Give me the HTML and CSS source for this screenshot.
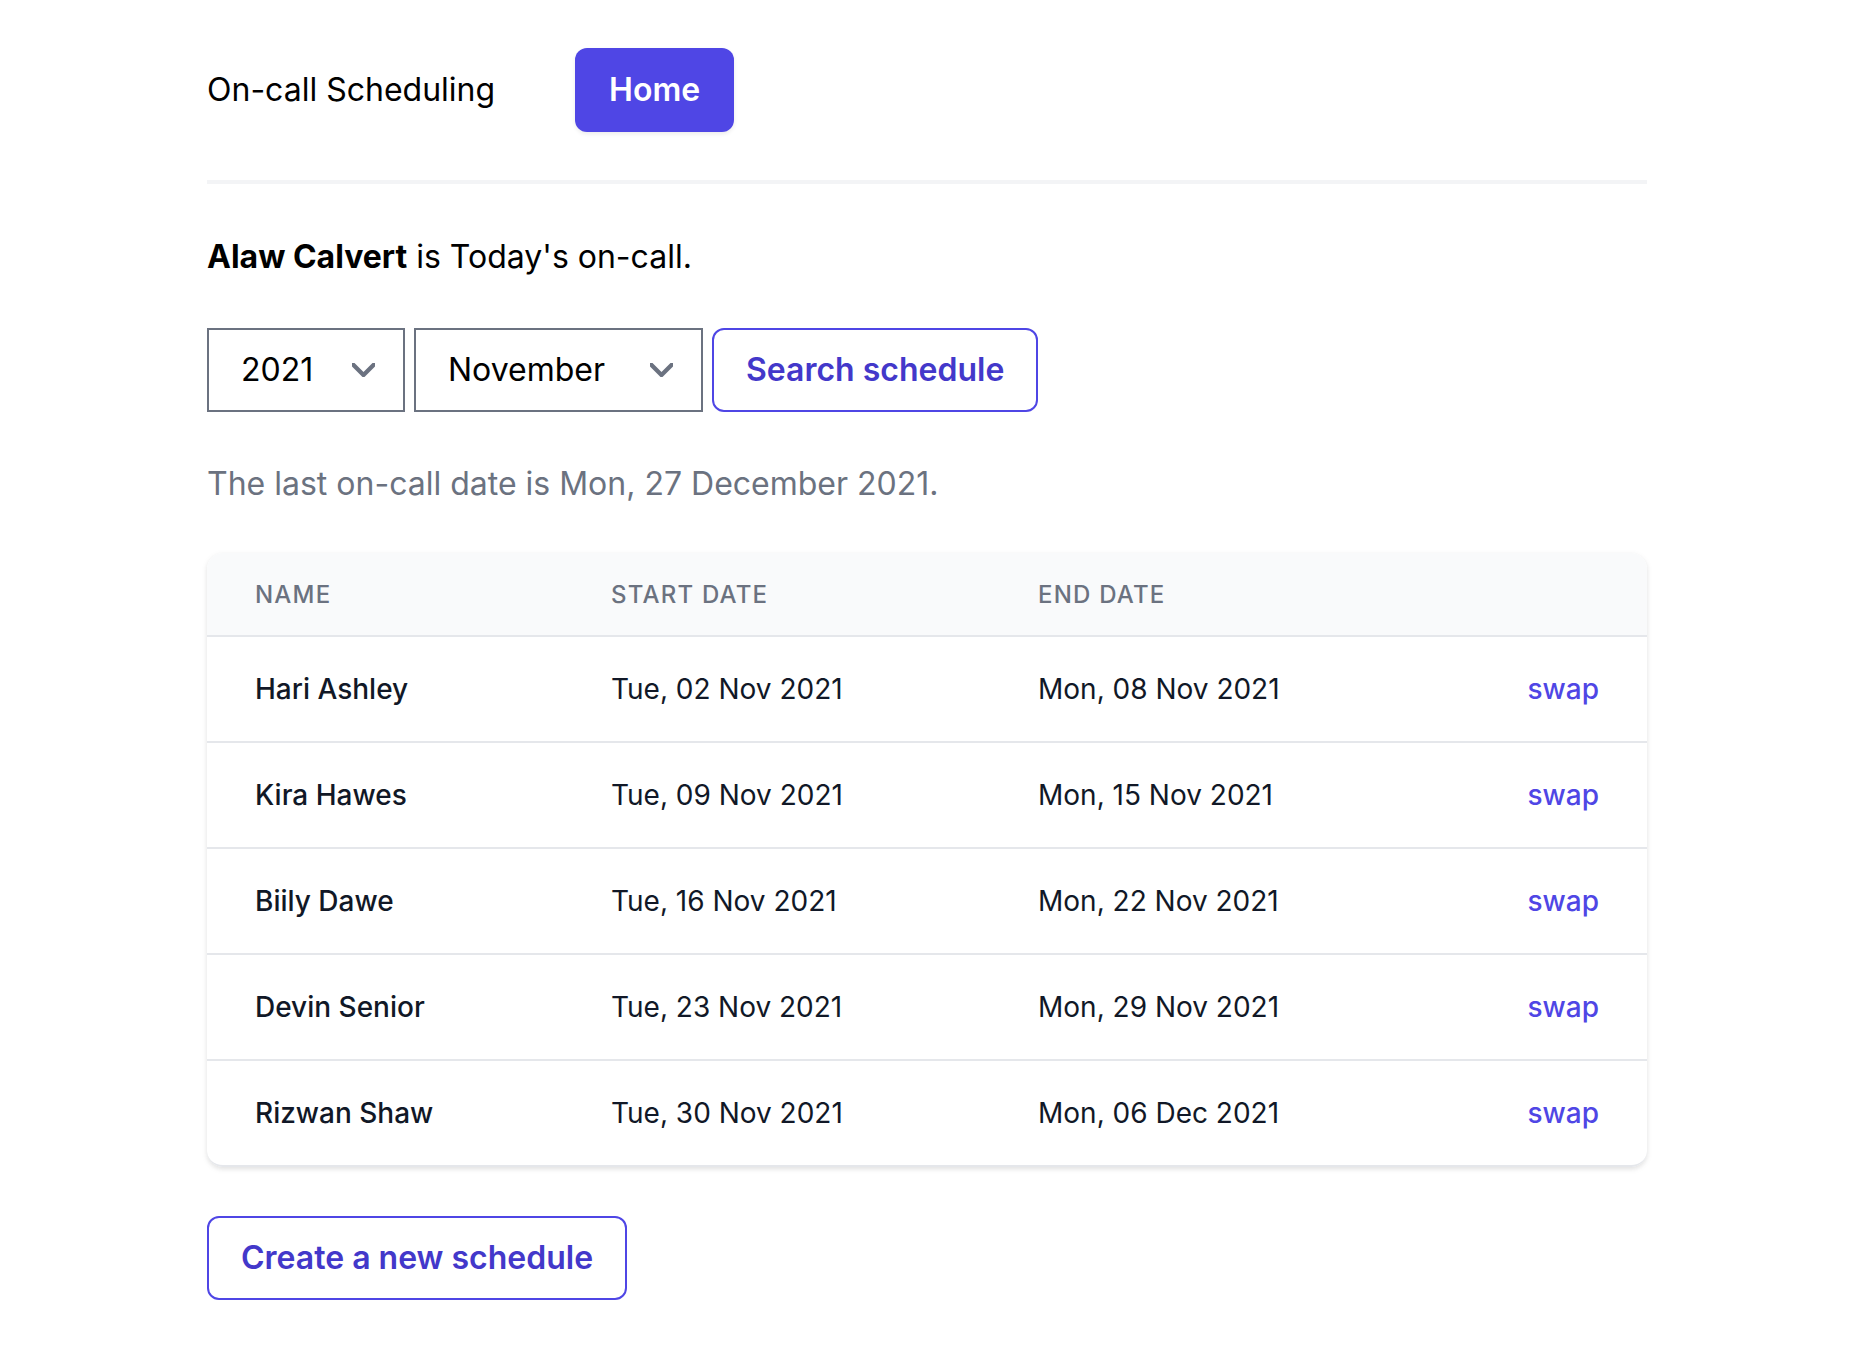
FILE: index.html
```html
<!DOCTYPE html>
<html lang="en">
<head>
<meta charset="utf-8">
<title>On-call Scheduling</title>
<link rel="stylesheet" href="styles.css">
</head>
<body>
<div class="container">
  <nav class="nav">
    <span class="brand">On-call Scheduling</span>
    <a class="btn-primary" href="#">Home</a>
  </nav>

  <main class="main">
    <p class="today"><strong>Alaw Calvert</strong> is Today's on-call.</p>

    <form class="search-row">
      <div class="select-wrap select-year">
        <select class="select">
          <option>2021</option>
        </select>
        <svg class="chevron" viewBox="6 8 8 4.5" width="23" height="14" fill="none" aria-hidden="true"><path d="M6 8l4 4 4-4" stroke="#6b7280" stroke-width="1.5" stroke-linecap="round" stroke-linejoin="round"/></svg>
      </div>
      <div class="select-wrap select-month">
        <select class="select">
          <option>November</option>
        </select>
        <svg class="chevron" viewBox="6 8 8 4.5" width="23" height="14" fill="none" aria-hidden="true"><path d="M6 8l4 4 4-4" stroke="#6b7280" stroke-width="1.5" stroke-linecap="round" stroke-linejoin="round"/></svg>
      </div>
      <button type="button" class="btn-outline">Search schedule</button>
    </form>

    <p class="last-date">The last on-call date is Mon, 27 December 2021.</p>

    <div class="table-card">
      <table class="table">
        <colgroup>
          <col class="col-name">
          <col class="col-start">
          <col class="col-end">
          <col class="col-action">
        </colgroup>
        <thead>
          <tr>
            <th>Name</th>
            <th>Start date</th>
            <th>End date</th>
            <th></th>
          </tr>
        </thead>
        <tbody>
          <tr>
            <td class="name">Hari Ashley</td>
            <td>Tue, 02 Nov 2021</td>
            <td>Mon, 08 Nov 2021</td>
            <td class="action"><a href="#">swap</a></td>
          </tr>
          <tr>
            <td class="name">Kira Hawes</td>
            <td>Tue, 09 Nov 2021</td>
            <td>Mon, 15 Nov 2021</td>
            <td class="action"><a href="#">swap</a></td>
          </tr>
          <tr>
            <td class="name">Biily Dawe</td>
            <td>Tue, 16 Nov 2021</td>
            <td>Mon, 22 Nov 2021</td>
            <td class="action"><a href="#">swap</a></td>
          </tr>
          <tr>
            <td class="name">Devin Senior</td>
            <td>Tue, 23 Nov 2021</td>
            <td>Mon, 29 Nov 2021</td>
            <td class="action"><a href="#">swap</a></td>
          </tr>
          <tr>
            <td class="name">Rizwan Shaw</td>
            <td>Tue, 30 Nov 2021</td>
            <td>Mon, 06 Dec 2021</td>
            <td class="action"><a href="#">swap</a></td>
          </tr>
        </tbody>
      </table>
    </div>

    <a class="btn-outline btn-create" href="#">Create a new schedule</a>
  </main>
</div>
</body>
</html>
```

FILE: styles.css
```css
* {
  box-sizing: border-box;
}

html, body {
  margin: 0;
  padding: 0;
  background: #ffffff;
}

body {
  font-family: Inter, "Noto Sans", "Liberation Sans", sans-serif;
  font-size: 32px;
  line-height: 48px;
  color: #000000;
}

.container {
  max-width: 1440px;
  margin: 0 auto;
}

.nav {
  display: flex;
  align-items: center;
  gap: 80px;
  padding: 48px 0 48px;
  border-bottom: 4px solid #f3f4f6;
}

.brand {
  font-size: 32px;
  line-height: 48px;
  font-weight: 400;
  color: #000;
}

.btn-primary {
  display: inline-block;
  padding: 16px 32px;
  border: 2px solid transparent;
  border-radius: 12px;
  background: #4f46e5;
  color: #ffffff;
  font-weight: 600;
  font-size: 32px;
  line-height: 48px;
  text-decoration: none;
  box-shadow: 0 2px 4px rgba(0, 0, 0, 0.08);
}

.main {
  padding-top: 49px;
}

.today {
  margin: 0;
}

.today strong {
  font-weight: 700;
}

.search-row {
  display: flex;
  align-items: stretch;
  gap: 9px;
  margin: 47px 0 0;
}

.select-wrap {
  position: relative;
  display: flex;
}

.select-year {
  width: 198px;
}

.select-month {
  width: 289px;
}

.select {
  appearance: none;
  -webkit-appearance: none;
  width: 100%;
  height: 84px;
  margin: 0;
  padding: 16px 80px 16px 32px;
  border: 2px solid #6b7280;
  border-radius: 0;
  background: #ffffff;
  color: #000000;
  font-family: inherit;
  font-size: 32px;
  line-height: 48px;
}

.chevron {
  position: absolute;
  right: 30px;
  top: 35px;
  pointer-events: none;
}

.btn-outline {
  display: inline-block;
  padding: 16px 32px;
  border: 2px solid #4f46e5;
  border-radius: 12px;
  background: #ffffff;
  color: #4338ca;
  font-family: inherit;
  font-weight: 600;
  font-size: 32px;
  line-height: 48px;
  text-decoration: none;
  cursor: pointer;
}

.last-date {
  margin: 48px 0 0;
  color: #6b7280;
}

.table-card {
  margin-top: 45px;
  border-radius: 16px;
  overflow: hidden;
  border-bottom: 2px solid #e5e7eb;
  box-shadow: 0 2px 6px rgba(0, 0, 0, 0.08), 0 2px 4px rgba(0, 0, 0, 0.05);
}

.table {
  width: 100%;
  border-collapse: collapse;
  table-layout: fixed;
}

.col-name { width: 356px; }
.col-start { width: 427px; }
.col-end { width: auto; }
.col-action { width: 200px; }

.table thead {
  background: #f9fafb;
}

.table th {
  padding: 26px 48px 24px;
  text-align: left;
  font-size: 24px;
  line-height: 32px;
  font-weight: 500;
  letter-spacing: 0.05em;
  text-transform: uppercase;
  color: #6b7280;
}

.table td {
  padding: 32px 48px;
  font-size: 28px;
  line-height: 40px;
  color: #111827;
  border-top: 2px solid #e5e7eb;
  white-space: nowrap;
}

.table td.name {
  font-weight: 500;
}

.table td.action {
  text-align: right;
}

.table td.action a {
  color: #4f46e5;
  font-weight: 500;
  text-decoration: none;
}

.btn-create {
  margin-top: 49px;
}
```
